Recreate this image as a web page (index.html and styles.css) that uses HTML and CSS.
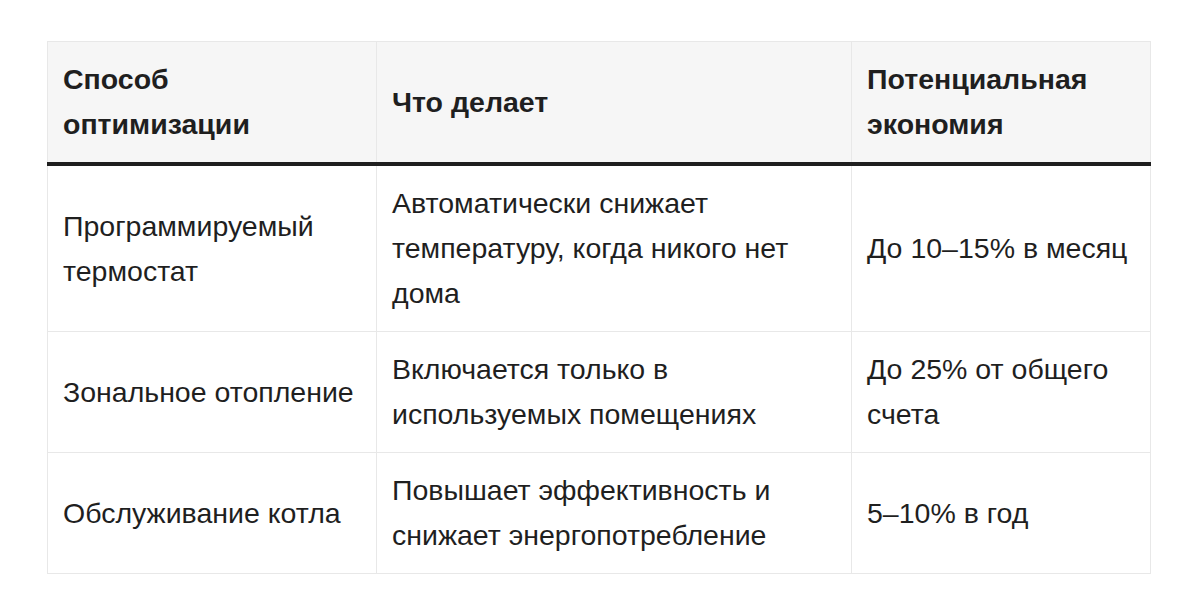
FILE: index.html
```html
<!DOCTYPE html>
<html lang="ru">
<head>
<meta charset="utf-8">
<link rel="stylesheet" href="styles.css">
</head>
<body>
<div class="wrap">
<table class="tbl">
<colgroup><col class="c1"><col class="c2"><col class="c3"></colgroup>
<thead>
<tr><th>Способ оптимизации</th><th>Что делает</th><th>Потенциальная экономия</th></tr>
</thead>
<tbody>
<tr><td>Программируемый термостат</td><td>Автоматически снижает температуру, когда никого нет дома</td><td>До 10–15% в месяц</td></tr>
<tr><td>Зональное отопление</td><td>Включается только в используемых помещениях</td><td>До 25% от общего счета</td></tr>
<tr><td>Обслуживание котла</td><td>Повышает эффективность и снижает энергопотребление</td><td>5–10% в год</td></tr>
</tbody>
</table>
</div>
</body>
</html>
```
FILE: styles.css
```css
html, body { margin: 0; padding: 0; background: #fff; }
.wrap { padding: 41px 0 0 47px; }
.tbl {
  border-collapse: collapse;
  table-layout: fixed;
  width: 1103px;
  font-family: "Liberation Sans", Arial, sans-serif;
  font-size: 28.5px;
  line-height: 45px;
  color: #1f1f1f;
}
.c1 { width: 329px; }
.c2 { width: 475px; }
.c3 { width: 299px; }
.tbl th, .tbl td {
  border: 1px solid #e8e8e8;
  padding: 15px 16px 15px 15px;
  text-align: left;
  vertical-align: middle;
}
.tbl th {
  background: #f6f6f6;
  font-weight: bold;
  border-bottom: 4px solid #1f1f1f;
}
```
